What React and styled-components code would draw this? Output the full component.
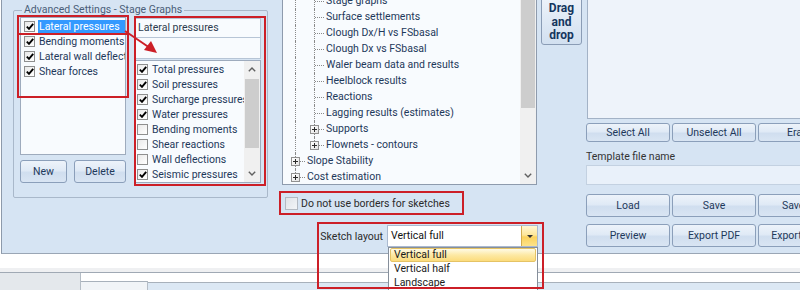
import React from "react";
import styled, { createGlobalStyle, css } from "styled-components";

const GlobalStyle = createGlobalStyle`
  * { box-sizing: border-box; }
  html, body { margin: 0; padding: 0; background: #ffffff; }
  body {
    font-family: Roboto, "Liberation Sans", sans-serif;
    font-size: 10.5px;
    color: #1e395b;
  }
`;

const Page = styled.div`
  position: relative;
  width: 800px;
  height: 290px;
  overflow: hidden;
`;

const MainPanel = styled.div`
  height: 254px;
  margin-left: 1px;
  border-left: 1px solid #8d9aab;
  border-bottom: 1px solid #9aa6b5;
  background: #d6e4f3;
  display: flex;
  padding-left: 11px;
`;

/* ---------- group box ---------- */
const GroupBox = styled.fieldset`
  margin: 3px 0 0 0;
  width: 255px;
  min-width: 0;
  height: 195px;
  padding: 0 6px;
  border: 1px solid #a9b8ca;
  border-radius: 2px;
  flex: none;
`;

const Legend = styled.legend`
  padding: 0 2px;
  margin-left: 2px;
  line-height: 14px;
  color: #4b5e79;
`;

const GroupInner = styled.div`
  display: flex;
  gap: 9px;
`;

const LeftCol = styled.div`
  width: 106px;
  flex: none;
  display: flex;
  flex-direction: column;
`;

const ListBox = styled.div`
  height: 138px;
  border: 1px solid #9eabbd;
  background: #f8fbfe;
  padding-top: 1px;
  overflow: hidden;
`;

const ListRow = styled.div`
  height: 15px;
  display: flex;
  align-items: center;
  gap: 3px;
  padding-left: ${(p) => p.$indent}px;
  white-space: nowrap;
  overflow: hidden;
`;

const ItemText = styled.span`
  line-height: 13px;
  padding: 0 1px;
  ${(p) =>
    p.$selected &&
    css`
      background: #3399ff;
      color: #ffffff;
      flex: 1;
    `}
`;

const ButtonRow = styled.div`
  display: flex;
  gap: ${(p) => p.$gap}px;
  margin-top: ${(p) => p.$mt}px;
`;

const Btn = styled.button`
  font: inherit;
  color: #1e395b;
  flex: none;
  width: ${(p) => p.$w}px;
  height: ${(p) => p.$h}px;
  padding: 0;
  border: 1px solid #8b9fba;
  border-radius: 3px;
  background: linear-gradient(#edf3fa 0%, #e0eaf6 45%, #d0deef 55%, #d9e5f3 100%);
  white-space: nowrap;
  overflow: hidden;
`;

const RightPane = styled.div`
  flex: 1;
  min-width: 0;
  margin-top: 1px;
  display: flex;
  flex-direction: column;
`;

const TitleBox = styled.div`
  height: 20px;
  border: 1px solid #b7c5d6;
  background: #f8fbfe;
  padding-left: 2px;
  line-height: 17px;
  color: #2d3b4f;
`;

const NoteBox = styled.div`
  height: 21px;
  border: 1px solid #b7c5d6;
  border-top: none;
  background: #f8fbfe;
`;

const CheckList = styled.div`
  margin-top: 1px;
  height: 123px;
  border: 1px solid #9eabbd;
  background: #f8fbfe;
  display: flex;
`;

const CheckItems = styled.div`
  flex: 1;
  min-width: 0;
  padding-top: 1px;
  overflow: hidden;
`;

/* ---------- checkbox ---------- */
const Box = styled.span`
  flex: none;
  width: ${(p) => p.$size}px;
  height: ${(p) => p.$size}px;
  border: 1px solid ${(p) => (p.$muted ? "#b3b9c1" : "#8e8f8f")};
  background: ${(p) =>
    p.$muted ? "linear-gradient(135deg, #dfe3e8, #f3f5f7)" : "linear-gradient(135deg, #e9e9e9, #ffffff)"};
  display: flex;
  align-items: center;
  justify-content: center;
`;

const CheckBox = ({ checked, size = 11, muted }) => (
  <Box $size={size} $muted={muted}>
    {checked && (
      <svg width="8" height="7" viewBox="0 0 8 7">
        <path d="M0.8 3.6 L3 5.8 L7.2 0.8" fill="none" stroke="#000" strokeWidth="1.9" />
      </svg>
    )}
  </Box>
);

/* ---------- scrollbar ---------- */
const ScrollBar = styled.div`
  width: 16px;
  flex: none;
  background: #f0f0f0;
  display: flex;
  flex-direction: column;
`;

const ScrollBtn = styled.div`
  height: 17px;
  flex: none;
  display: flex;
  align-items: center;
  justify-content: center;
`;

const ScrollTrack = styled.div`
  flex: 1;
  padding-top: ${(p) => p.$offset}px;
`;

const Thumb = styled.div`
  margin: 0 1px;
  height: ${(p) => p.$h}px;
  background: #cdcdcd;
`;

const Chevron = ({ up }) => (
  <svg width="8" height="5" viewBox="0 0 8 5">
    <path
      d={up ? "M0.8 4.2 L4 1 L7.2 4.2" : "M0.8 0.8 L4 4 L7.2 0.8"}
      fill="none"
      stroke="#606060"
      strokeWidth="1.4"
    />
  </svg>
);

/* ---------- tree ---------- */
const MidCol = styled.div`
  width: 255px;
  margin-left: 14px;
  flex: none;
  display: flex;
  flex-direction: column;
`;

const TreeBox = styled.div`
  height: 185px;
  border: 1px solid #8e9bad;
  border-top: none;
  background: #f8fbfe;
  display: flex;
`;

const TreeBody = styled.div`
  flex: 1;
  min-width: 0;
  overflow: hidden;
  padding-left: 3px;
`;

const TreeList = styled.div`
  margin-top: -7px;
`;

const TreeRow = styled.div`
  height: 16px;
  display: flex;
  white-space: nowrap;
`;

const dotted = "1px dotted #8a8a8a";

const Guide = styled.span`
  width: 19px;
  flex: none;
  position: relative;
  &::before {
    content: "";
    position: absolute;
    left: 9px;
    top: 0;
    bottom: 0;
    border-left: ${dotted};
  }
`;

const Joint = styled.span`
  width: 19px;
  flex: none;
  position: relative;
  &::before {
    content: "";
    position: absolute;
    left: 9px;
    top: 0;
    height: ${(p) => (p.$last ? "8px" : "100%")};
    border-left: ${dotted};
  }
  &::after {
    content: "";
    position: absolute;
    left: 10px;
    top: 8px;
    width: 9px;
    border-top: ${dotted};
  }
`;

const PlusBox = styled.span`
  position: absolute;
  z-index: 1;
  left: 5px;
  top: 4px;
  width: 9px;
  height: 9px;
  border: 1px solid #919191;
  background: linear-gradient(135deg, #ffffff, #e3e3e3);
  &::before,
  &::after {
    content: "";
    position: absolute;
    background: #2a2a2a;
  }
  &::before {
    left: 1px;
    top: 3px;
    width: 5px;
    height: 1px;
  }
  &::after {
    left: 3px;
    top: 1px;
    width: 1px;
    height: 5px;
  }
`;

const TreeLabel = styled.span`
  padding-left: 2px;
  line-height: 16px;
  color: #1e395b;
`;

const treeRows = [
  { label: "Stage graphs", level: 1 },
  { label: "Surface settlements", level: 1 },
  { label: "Clough Dx/H vs FSbasal", level: 1 },
  { label: "Clough Dx vs FSbasal", level: 1 },
  { label: "Waler beam data and results", level: 1 },
  { label: "Heelblock results", level: 1 },
  { label: "Reactions", level: 1 },
  { label: "Lagging results (estimates)", level: 1 },
  { label: "Supports", level: 1, plus: true },
  { label: "Flownets - contours", level: 1, plus: true, last: true },
  { label: "Slope Stability", level: 0, plus: true },
  { label: "Cost estimation", level: 0, plus: true, last: true },
];

const OptionRow = styled.div`
  margin-top: 10px;
  height: 16px;
  padding-left: 3px;
  display: flex;
  align-items: center;
  gap: 3px;
  color: #2b2b2b;
`;

const SketchRow = styled.div`
  margin-top: 14px;
  margin-right: -1px;
  display: flex;
  justify-content: flex-end;
  align-items: center;
  gap: 4px;
  color: #2b2b2b;
`;

const Combo = styled.div`
  position: relative;
  width: 151px;
  height: 22px;
  border: 1px solid #abbad0;
  background: #ffffff;
  display: flex;
`;

const ComboText = styled.span`
  flex: 1;
  padding-left: 3px;
  line-height: 20px;
  color: #111111;
`;

const ComboBtn = styled.span`
  width: 16px;
  border-left: 1px solid #d2ad4f;
  background: linear-gradient(#fff6d2 0%, #fde79a 45%, #fbd25c 55%, #fde38a 100%);
  display: flex;
  align-items: center;
  justify-content: center;
  &::before {
    content: "";
    border-left: 3px solid transparent;
    border-right: 3px solid transparent;
    border-top: 3px solid #333333;
  }
`;

const DropList = styled.div`
  position: absolute;
  z-index: 3;
  top: 21px;
  left: 0px;
  width: 150px;
  height: 46px;
  border: 1px solid #868f9b;
  background: #ffffff;
  padding: 0 1px;
`;

const DropItem = styled.div`
  height: 14px;
  line-height: 12px;
  padding-left: 3px;
  color: #1a1a1a;
  border: 1px solid transparent;
  border-radius: 2px;
  ${(p) =>
    p.$active &&
    css`
      border-color: #e5c365;
      background: linear-gradient(#fffbe6 0%, #fde9a4 50%, #fcdc7c 100%);
    `}
`;

/* ---------- drag column ---------- */
const DragCol = styled.div`
  width: 49px;
  flex: none;
  padding-left: 4px;
`;

const DragBtn = styled.div`
  width: 41px;
  height: 49px;
  margin-top: -4px;
  padding-top: 5px;
  border: 1px solid #8a9cb5;
  border-radius: 3px;
  background: linear-gradient(#eef3fa 0%, #dfe9f5 50%, #d2e0f0 100%);
  text-align: center;
  font-weight: bold;
  font-size: 12px;
  line-height: 13.5px;
  color: #15365e;
`;

/* ---------- right column ---------- */
const RightCol = styled.div`
  width: 260px;
  flex: none;
  display: flex;
  flex-direction: column;
`;

const BigBox = styled.div`
  height: 119px;
  margin-left: 1px;
  border-left: 1px solid #a3b2c6;
  border-bottom: 1px solid #a3b2c6;
  background: #eef3fa;
`;

const FieldLabel = styled.div`
  margin-top: 8px;
  line-height: 14px;
  color: #333333;
`;

const TextField = styled.div`
  margin-top: 1px;
  height: 20px;
  border: 1px solid #c3d1e1;
  background: #e9f1fa;
`;

/* ---------- bottom ---------- */
const WhiteGap = styled.div`
  height: 14px;
`;

const LightBand = styled.div`
  height: 4px;
  background: #eff0f2;
`;

const BottomBar = styled.div`
  height: 18px;
  border-top: 1px solid #a0a9b4;
  display: flex;
  background: #ffffff;
`;

const BarTab = styled.div`
  width: ${(p) => p.$w}px;
  flex: ${(p) => (p.$w ? "none" : "1")};
  margin-top: ${(p) => p.$mt}px;
  background: ${(p) => p.$bg};
  border-top: ${(p) => (p.$mt ? "1px solid #a8b1bb" : "none")};
  border-right: ${(p) => (p.$edge ? "1px solid #b5bdc6" : "none")};
`;

/* ---------- annotations ---------- */
const Overlay = styled.svg`
  position: absolute;
  left: 0;
  top: 0;
  pointer-events: none;
  z-index: 5;
`;

const leftItems = [
  { label: "Lateral pressures", checked: true, selected: true },
  { label: "Bending moments", checked: true },
  { label: "Lateral wall deflections", checked: true },
  { label: "Shear forces", checked: true },
];

const rightItems = [
  { label: "Total pressures", checked: true },
  { label: "Soil pressures", checked: true },
  { label: "Surcharge pressures", checked: true },
  { label: "Water pressures", checked: true },
  { label: "Bending moments", checked: false },
  { label: "Shear reactions", checked: false },
  { label: "Wall deflections", checked: false },
  { label: "Seismic pressures", checked: true },
];

export default function App() {
  return (
    <Page>
      <GlobalStyle />
      <MainPanel>
        <GroupBox>
          <Legend>Advanced Settings - Stage Graphs</Legend>
          <GroupInner>
            <LeftCol>
              <ListBox>
                {leftItems.map((it) => (
                  <ListRow key={it.label} $indent={3}>
                    <CheckBox checked={it.checked} />
                    <ItemText $selected={it.selected}>{it.label}</ItemText>
                  </ListRow>
                ))}
              </ListBox>
              <ButtonRow $gap={7} $mt={5}>
                <Btn $w={47} $h={23}>New</Btn>
                <Btn $w={52} $h={23}>Delete</Btn>
              </ButtonRow>
            </LeftCol>
            <RightPane>
              <TitleBox>Lateral pressures</TitleBox>
              <NoteBox />
              <CheckList>
                <CheckItems>
                  {rightItems.map((it) => (
                    <ListRow key={it.label} $indent={1}>
                      <CheckBox checked={it.checked} />
                      <ItemText>{it.label}</ItemText>
                    </ListRow>
                  ))}
                </CheckItems>
                <ScrollBar>
                  <ScrollBtn>
                    <Chevron up />
                  </ScrollBtn>
                  <ScrollTrack $offset={1}>
                    <Thumb $h={69} />
                  </ScrollTrack>
                  <ScrollBtn>
                    <Chevron />
                  </ScrollBtn>
                </ScrollBar>
              </CheckList>
            </RightPane>
          </GroupInner>
        </GroupBox>

        <MidCol>
          <TreeBox>
            <TreeBody>
              <TreeList>
                {treeRows.map((r) => (
                  <TreeRow key={r.label}>
                    {r.level === 1 && <Guide />}
                    <Joint $last={r.last}>{r.plus && <PlusBox />}</Joint>
                    <TreeLabel>{r.label}</TreeLabel>
                  </TreeRow>
                ))}
              </TreeList>
            </TreeBody>
            <ScrollBar>
              <ScrollTrack $offset={0}>
                <Thumb $h={108} />
              </ScrollTrack>
              <ScrollBtn>
                <Chevron />
              </ScrollBtn>
            </ScrollBar>
          </TreeBox>
          <OptionRow>
            <CheckBox size={13} muted />
            <span>Do not use borders for sketches</span>
          </OptionRow>
          <SketchRow>
            <span>Sketch layout</span>
            <Combo>
              <ComboText>Vertical full</ComboText>
              <ComboBtn />
              <DropList>
                <DropItem $active>Vertical full</DropItem>
                <DropItem>Vertical half</DropItem>
                <DropItem>Landscape</DropItem>
              </DropList>
            </Combo>
          </SketchRow>
        </MidCol>

        <DragCol>
          <DragBtn>
            Drag
            <br />
            and
            <br />
            drop
          </DragBtn>
        </DragCol>

        <RightCol>
          <BigBox />
          <ButtonRow $gap={2} $mt={4}>
            <Btn $w={84} $h={19}>Select All</Btn>
            <Btn $w={84} $h={19}>Unselect All</Btn>
            <Btn $w={84} $h={19}>Erase</Btn>
          </ButtonRow>
          <FieldLabel>Template file name</FieldLabel>
          <TextField />
          <ButtonRow $gap={2} $mt={9}>
            <Btn $w={84} $h={23}>Load</Btn>
            <Btn $w={84} $h={23}>Save</Btn>
            <Btn $w={84} $h={23}>Save as</Btn>
          </ButtonRow>
          <ButtonRow $gap={2} $mt={7}>
            <Btn $w={84} $h={23}>Preview</Btn>
            <Btn $w={84} $h={23}>Export PDF</Btn>
            <Btn $w={84} $h={23}>Export Word</Btn>
          </ButtonRow>
        </RightCol>
      </MainPanel>
      <WhiteGap />
      <LightBand />
      <BottomBar>
        <BarTab $w={81} $mt={0} $bg="#e4e8ec" $edge />
        <BarTab $w={67} $mt={8} $bg="#f1f4f7" $edge />
        <BarTab $mt={9} $bg="#dce8f4" />
      </BottomBar>

      <Overlay width="800" height="290" viewBox="0 0 800 290">
        <g fill="none" stroke="#cc1f27" strokeWidth="2">
          <rect x="18" y="16" width="110" height="81" />
          <rect x="18" y="16" width="110" height="18" />
          <rect x="135" y="17" width="130" height="168" />
          <rect x="280" y="192" width="183" height="22" />
          <rect x="318" y="223" width="225" height="65" />
          <line x1="125" y1="31" x2="150" y2="48" />
        </g>
        <polygon points="157,53 144,50 151,41" fill="#cc1f27" />
      </Overlay>
    </Page>
  );
}
